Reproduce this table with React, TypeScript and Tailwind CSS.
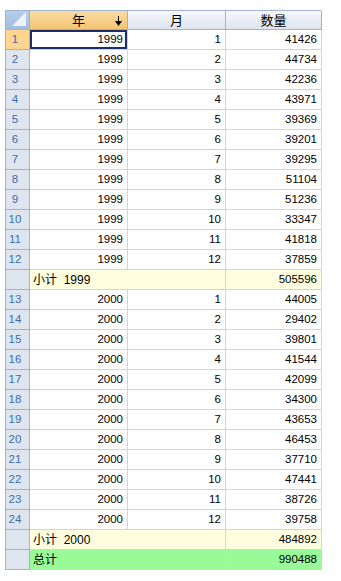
import React from 'react';

type Row = { no: number; year: string; month: number; qty: number };

const y1999 = [41426, 44734, 42236, 43971, 39369, 39201, 39295, 51104, 51236, 33347, 41818, 37859];
const y2000 = [44005, 29402, 39801, 41544, 42099, 34300, 43653, 46453, 37710, 47441, 38726, 39758];

const rows1999: Row[] = y1999.map((q, i) => ({ no: i + 1, year: '1999', month: i + 1, qty: q }));
const rows2000: Row[] = y2000.map((q, i) => ({ no: i + 13, year: '2000', month: i + 1, qty: q }));

const font = "font-['Liberation_Sans','Noto_Sans_CJK_SC',sans-serif]";

const RowHead = ({ children, active }: { children?: React.ReactNode; active?: boolean }) => (
  <div
    className={
      active
        ? 'h-[20px] flex items-center justify-center pr-[5px] bg-[#ffd68f] border-r border-b border-[#f2a33c] text-[#3b6db0]'
        : 'h-[20px] flex items-center justify-center pr-[5px] bg-[#dfe5ef] border-r border-b border-[#9db5d2] text-[#3b6db0]'
    }
  >
    {children}
  </div>
);

const Cell = ({ children, active }: { children: React.ReactNode; active?: boolean }) => (
  <div
    className={
      active
        ? 'h-[20px] flex items-center justify-end pr-[4px] bg-white border-r border-b border-[#d4d4d4] shadow-[inset_0_0_0_2px_#1c2d6a] text-black'
        : 'h-[20px] flex items-center justify-end pr-[4px] bg-white border-r border-b border-[#d4d4d4] text-black'
    }
  >
    {children}
  </div>
);

const DataRows = ({ rows }: { rows: Row[] }) => (
  <>
    {rows.map((r) => (
      <React.Fragment key={r.no}>
        <RowHead active={r.no === 1}>{r.no}</RowHead>
        <Cell active={r.no === 1}>{r.year}</Cell>
        <Cell>{r.month}</Cell>
        <Cell>{r.qty}</Cell>
      </React.Fragment>
    ))}
  </>
);

const SummaryRow = ({ label, value, total }: { label: string; value: number; total?: boolean }) => (
  <>
    <RowHead />
    <div
      className={
        'col-span-2 h-[20px] flex items-center pl-[3px] whitespace-pre border-r border-b border-[#d4d4d4] text-black text-[12px] ' +
        (total ? 'bg-[#98fb98]' : 'bg-[#ffffe0]')
      }
    >
      {label}
    </div>
    <div
      className={
        'h-[20px] flex items-center justify-end pr-[4px] border-r border-b border-[#d4d4d4] text-black ' +
        (total ? 'bg-[#98fb98]' : 'bg-[#ffffe0]')
      }
    >
      {value}
    </div>
  </>
);

export default function App() {
  return (
    <div className={`w-[341px] h-[581px] bg-white pl-[5px] pt-[10px] text-[11.5px] leading-none ${font}`}>
      <div className="grid grid-cols-[24px_98px_98px_96px] w-[316px] border-l border-t border-[#9db5d2]">
        {/* header */}
        <div className="h-[19px] relative bg-gradient-to-b from-[#b7cdea] to-[#a2bde2] border-r border-b border-[#9db5d2]">
          <svg className="absolute right-[3px] bottom-[3px]" width="14" height="14" viewBox="0 0 14 14">
            <polygon points="14,0 14,14 0,14" fill="#f4f7fb" opacity="0.9" />
          </svg>
        </div>
        <div className="h-[19px] relative flex items-center justify-center bg-gradient-to-b from-[#f9dca4] to-[#f5c470] border-r border-b border-[#f2a33c] text-[13px]">
          年
          <svg className="absolute right-[5px] top-[5px]" width="7" height="10" viewBox="0 0 7 10">
            <rect x="3" y="0" width="1" height="8" fill="#000" />
            <polygon points="0,5 7,5 3.5,10" fill="#000" />
          </svg>
        </div>
        <div className="h-[19px] flex items-center justify-center bg-gradient-to-b from-[#f6f8fb] to-[#dde5ef] border-r border-b border-[#9db5d2] text-[13px]">
          月
        </div>
        <div className="h-[19px] flex items-center justify-center bg-gradient-to-b from-[#f6f8fb] to-[#dde5ef] border-r border-b border-[#9db5d2] text-[13px]">
          数量
        </div>

        <DataRows rows={rows1999} />
        <SummaryRow label="小计  1999" value={505596} />
        <DataRows rows={rows2000} />
        <SummaryRow label="小计  2000" value={484892} />
        <SummaryRow label="总计" value={990488} total />
      </div>
    </div>
  );
}
